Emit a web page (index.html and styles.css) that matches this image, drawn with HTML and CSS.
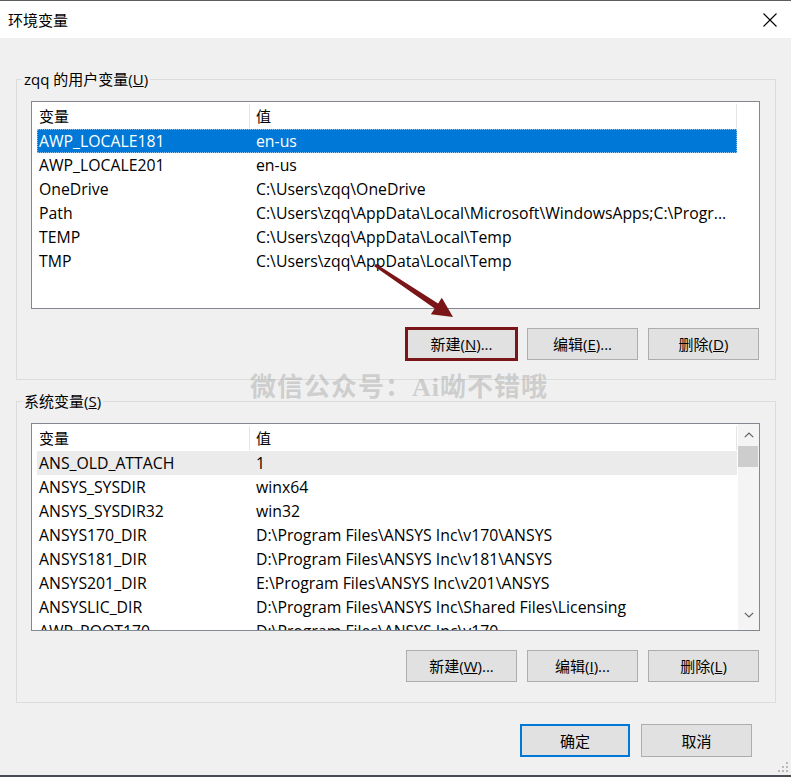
FILE: index.html
```html
<!DOCTYPE html>
<html lang="zh-CN">
<head>
<meta charset="utf-8">
<title>环境变量</title>
<link rel="stylesheet" href="styles.css">
</head>
<body>
<div class="window">
  <header class="titlebar">
    <span class="title">环境变量</span>
    <button class="close" aria-label="关闭">
      <svg width="14" height="14" viewBox="0 0 14 14"><path d="M0.5 0.5L13.5 13.5M13.5 0.5L0.5 13.5" stroke="#000" stroke-width="1.1" fill="none"/></svg>
    </button>
  </header>

  <main class="content">
    <fieldset class="group">
      <legend>zqq 的用户变量(<u>U</u>)</legend>
      <div class="list">
        <div class="view">
          <div class="row head"><span class="c1">变量</span><span class="c2">值</span></div>
          <div class="row sel"><span class="c1">AWP_LOCALE181</span><span class="c2">en-us</span></div>
          <div class="row"><span class="c1">AWP_LOCALE201</span><span class="c2">en-us</span></div>
          <div class="row"><span class="c1">OneDrive</span><span class="c2">C:\Users\zqq\OneDrive</span></div>
          <div class="row"><span class="c1">Path</span><span class="c2">C:\Users\zqq\AppData\Local\Microsoft\WindowsApps;C:\Progr...</span></div>
          <div class="row"><span class="c1">TEMP</span><span class="c2">C:\Users\zqq\AppData\Local\Temp</span></div>
          <div class="row"><span class="c1">TMP</span><span class="c2">C:\Users\zqq\AppData\Local\Temp</span></div>
        </div>
      </div>
      <div class="btns">
        <button class="btn marked">新建(<u>N</u>)...</button>
        <button class="btn">编辑(<u>E</u>)...</button>
        <button class="btn">删除(<u>D</u>)</button>
      </div>
    </fieldset>

    <fieldset class="group second">
      <legend>系统变量(<u>S</u>)</legend>
      <div class="list">
        <div class="view">
          <div class="row head"><span class="c1">变量</span><span class="c2">值</span></div>
          <div class="row hl"><span class="c1">ANS_OLD_ATTACH</span><span class="c2">1</span></div>
          <div class="row"><span class="c1">ANSYS_SYSDIR</span><span class="c2">winx64</span></div>
          <div class="row"><span class="c1">ANSYS_SYSDIR32</span><span class="c2">win32</span></div>
          <div class="row"><span class="c1">ANSYS170_DIR</span><span class="c2">D:\Program Files\ANSYS Inc\v170\ANSYS</span></div>
          <div class="row"><span class="c1">ANSYS181_DIR</span><span class="c2">D:\Program Files\ANSYS Inc\v181\ANSYS</span></div>
          <div class="row"><span class="c1">ANSYS201_DIR</span><span class="c2">E:\Program Files\ANSYS Inc\v201\ANSYS</span></div>
          <div class="row"><span class="c1">ANSYSLIC_DIR</span><span class="c2">D:\Program Files\ANSYS Inc\Shared Files\Licensing</span></div>
          <div class="row"><span class="c1">AWP_ROOT170</span><span class="c2">D:\Program Files\ANSYS Inc\v170</span></div>
        </div>
        <div class="scroll">
          <div class="sarrow"><svg width="10" height="6" viewBox="0 0 10 6"><path d="M0.8 5.2L5 1L9.2 5.2" stroke="#606060" stroke-width="1.2" fill="none"/></svg></div>
          <div class="thumb"></div>
          <div class="track"></div>
          <div class="sarrow down"><svg width="10" height="6" viewBox="0 0 10 6"><path d="M0.8 0.8L5 5L9.2 0.8" stroke="#606060" stroke-width="1.2" fill="none"/></svg></div>
        </div>
      </div>
      <div class="btns">
        <button class="btn">新建(<u>W</u>)...</button>
        <button class="btn">编辑(<u>I</u>)...</button>
        <button class="btn">删除(<u>L</u>)</button>
      </div>
    </fieldset>
  </main>

  <footer class="footer">
    <button class="btn primary">确定</button>
    <button class="btn cancel">取消</button>
  </footer>

  <svg class="arrow" width="791" height="777" viewBox="0 0 791 777">
    <polygon points="375.8,263.8 438.1,303.4 441.8,297.8 453,317 430.9,314.2 434.7,308.4 374.2,266.2" fill="#7a1518"/>
  </svg>
  <div class="watermark">微信公众号：Ai呦不错哦</div>
  <svg class="grip" width="12" height="12" viewBox="0 0 12 12">
    <rect x="9" y="1" width="2" height="2" fill="#b9b9b9"/>
    <rect x="9" y="5" width="2" height="2" fill="#b9b9b9"/>
    <rect x="5" y="5" width="2" height="2" fill="#b9b9b9"/>
    <rect x="9" y="9" width="2" height="2" fill="#b9b9b9"/>
    <rect x="5" y="9" width="2" height="2" fill="#b9b9b9"/>
    <rect x="1" y="9" width="2" height="2" fill="#b9b9b9"/>
  </svg>
</div>
</body>
</html>
```

FILE: styles.css
```css
* { box-sizing: border-box; }

html, body {
  margin: 0;
  padding: 0;
}

body {
  width: 791px;
  height: 777px;
  overflow: hidden;
  background: #f0f0f0;
  font-family: "Open Sans", "Noto Sans CJK SC", sans-serif;
  font-size: 15px;
  color: #000;
}

.window {
  position: relative;
  width: 791px;
  height: 777px;
  display: flex;
  flex-direction: column;
  background: #f0f0f0;
  border-top: 1px solid #5e5e5e;
  border-bottom: 2px solid #474c52;
}

.titlebar {
  flex: none;
  height: 37px;
  background: #fff;
  display: flex;
  align-items: center;
  justify-content: space-between;
  padding: 0 14px 0 8px;
}

.title {
  font-family: "Noto Sans CJK SC", sans-serif;
  font-size: 15px;
  line-height: 20px;
}

.close {
  border: 0;
  background: none;
  padding: 0;
  display: flex;
}

.content {
  flex: none;
  padding: 0 15px 0 16px;
}

.group {
  margin: 31px 0 0;
  padding: 12px 15px 19px 5px;
  border: 1px solid #dcdcdc;
  min-width: 0;
}

.group.second {
  margin-top: 11px;
  padding-bottom: 20px;
}

legend {
  padding: 0 2px;
  line-height: 20px;
  height: 20px;
  font-size: 15px;
}

.list {
  margin-left: 9px;
  width: 729px;
  height: 208px;
  border: 1px solid #828790;
  background: #fff;
  display: flex;
  overflow: hidden;
}

.view {
  flex: none;
  width: 705px;
  padding-left: 5px;
}

.row {
  display: flex;
  height: 24px;
  line-height: 24px;
  white-space: nowrap;
  font-size: 15.8px;
}

.c1 {
  flex: none;
  width: 212px;
  padding-left: 2px;
  overflow: hidden;
}

.c2 {
  flex: 1;
  padding-left: 7px;
  overflow: hidden;
}

.row.head {
  height: 27px;
  padding-top: 2px;
  font-size: 15px;
}

.row.head span {
  height: 24px;
  line-height: 25px;
}

.row.head .c2 {
  border-left: 1px solid #e5e5e5;
  border-right: 1px solid #e5e5e5;
  padding-left: 6px;
}

.row.sel {
  background: #0078d7;
  color: #fff;
  outline: 1px dotted #8cc2ee;
  outline-offset: -1px;
}

.row.hl {
  background: #ebebeb;
}

.scroll {
  flex: 1;
  margin-left: 1px;
  background: #f4f4f4;
  display: flex;
  flex-direction: column;
}

.sarrow {
  flex: none;
  height: 21px;
  display: flex;
  align-items: center;
  justify-content: center;
}

.sarrow.down {
  height: 24px;
  align-items: flex-start;
  padding-top: 6px;
}

.thumb {
  flex: none;
  height: 21px;
  margin: 1px 1px 0 0;
  background: #cdcdcd;
}

.track {
  flex: 1;
}

.btns {
  display: flex;
  justify-content: flex-end;
  gap: 10px;
  margin-top: 19px;
  padding-right: 1px;
}

.btn {
  width: 111px;
  height: 32px;
  padding: 0;
  background: #e1e1e1;
  border: 1px solid #adadad;
  font-family: "Open Sans", "Noto Sans CJK SC", sans-serif;
  font-size: 15px;
  line-height: 28px;
  color: #000;
}

.btn.marked {
  outline: 3px solid #7a1518;
  outline-offset: -2px;
}

.footer {
  flex: none;
  display: flex;
  justify-content: flex-end;
  gap: 11px;
  padding: 21px 39px 0 0;
}

.footer .btn {
  height: 33px;
}

.btn.primary {
  width: 110px;
  border: 2px solid #0078d7;
}

.arrow {
  position: absolute;
  left: 0;
  top: -1px;
  pointer-events: none;
}

.watermark {
  position: absolute;
  left: 250px;
  top: 371px;
  font-family: "Liberation Serif", "Noto Sans CJK SC", serif;
  font-weight: bold;
  font-size: 26px;
  line-height: 32px;
  letter-spacing: 1px;
  color: rgba(150, 150, 150, 0.4);
  white-space: nowrap;
  pointer-events: none;
}

.grip {
  position: absolute;
  right: 2px;
  bottom: 2px;
}
```
